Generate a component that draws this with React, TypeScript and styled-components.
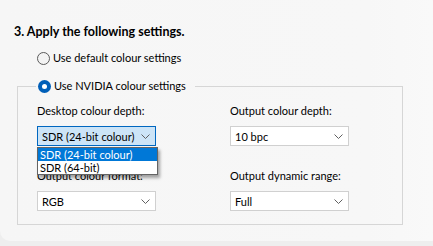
import React from "react";
import styled, { createGlobalStyle } from "styled-components";

const Global = createGlobalStyle`
  html, body { margin: 0; padding: 0; background: #eeeeee; }
  body { font-family: Lato, "Noto Sans", sans-serif; font-size: 11px; color: #000; }
  * { box-sizing: border-box; }
`;

const Panel = styled.div`
  width: 433px;
  height: 241px;
  background: linear-gradient(to right, #f6f6f6 0%, #f7f7f7 85%, #f9f9f9 100%);
  border-bottom-left-radius: 10px;
  padding-top: 24px;
  overflow: hidden;
`;

const Title = styled.div`
  font-weight: 700;
  font-size: 12.5px;
  line-height: 16px;
  margin-left: 14px;
  color: #000;
`;

const RadioRow = styled.label<{ $indent?: number }>`
  display: flex;
  align-items: center;
  gap: 3px;
  height: 16px;
  line-height: 16px;
  margin-left: ${(p) => p.$indent ?? 0}px;
  color: #000;
  white-space: nowrap;
`;

const RadioDot = styled.span<{ $checked?: boolean }>`
  width: 13px;
  height: 13px;
  border-radius: 50%;
  flex: none;
  display: flex;
  align-items: center;
  justify-content: center;
  border: ${(p) => (p.$checked ? "none" : "1px solid #5a5a5a")};
  background: ${(p) => (p.$checked ? "#005fb8" : "#f3f3f3")};
  &::after {
    content: "";
    display: ${(p) => (p.$checked ? "block" : "none")};
    width: 5px;
    height: 5px;
    border-radius: 50%;
    background: #ffffff;
  }
`;

const FirstRadio = styled.div`
  margin-top: 10px;
`;

const Group = styled.fieldset`
  margin: 12px 0 0 17px;
  width: 386px;
  border: 1px solid #d6d6d6;
  padding: 9px 0 13px 19px;
  min-width: 0;
`;

const Legend = styled.legend`
  padding: 0 9px 0 2px;
  margin-left: -1px;
`;

const Grid = styled.div`
  display: grid;
  grid-template-columns: 193px 1fr;
  row-gap: 22px;
`;

const Field = styled.div`
  display: flex;
  flex-direction: column;
  gap: 7px;
  position: relative;
`;

const Label = styled.div`
  line-height: 16px;
  color: #000;
  white-space: nowrap;
`;

const SelectBox = styled.div<{ $focused?: boolean }>`
  position: relative;
  width: 119px;
  height: 20px;
  display: flex;
  align-items: center;
  justify-content: space-between;
  padding: 0 5px 0 4px;
  background: ${(p) => (p.$focused ? "#cce4f7" : "#ffffff")};
  border: 1px solid ${(p) => (p.$focused ? "#0067c0" : "#d0d0d0")};
  color: #000;
  white-space: nowrap;
`;

const Chevron = () => (
  <svg width="9" height="5" viewBox="0 0 9 5" style={{ display: "block" }}>
    <path d="M0.5 0.5 L4.5 4.5 L8.5 0.5" fill="none" stroke="#606060" strokeWidth="1" />
  </svg>
);

const Popup = styled.div`
  position: absolute;
  top: 20px;
  left: -1px;
  width: 121px;
  background: #ffffff;
  border: 1px solid #646464;
  box-shadow: 2px 3px 3px rgba(0, 0, 0, 0.35);
  z-index: 5;
  padding: 0;
`;

const Option = styled.div<{ $active?: boolean }>`
  height: 13px;
  line-height: 13px;
  padding-left: 2px;
  background: ${(p) => (p.$active ? "#0078d7" : "#ffffff")};
  color: ${(p) => (p.$active ? "#ffffff" : "#000000")};
  white-space: nowrap;
`;

const Select = ({ value, focused, children }: { value: string; focused?: boolean; children?: React.ReactNode }) => (
  <SelectBox $focused={focused}>
    <span>{value}</span>
    <Chevron />
    {children}
  </SelectBox>
);

export default function App() {
  return (
    <>
      <Global />
      <Panel>
        <Title>3. Apply the following settings.</Title>
        <FirstRadio>
          <RadioRow $indent={37}>
            <RadioDot />
            Use default colour settings
          </RadioRow>
        </FirstRadio>
        <Group>
          <Legend>
            <RadioRow>
              <RadioDot $checked />
              Use NVIDIA colour settings
            </RadioRow>
          </Legend>
          <Grid>
            <Field>
              <Label>Desktop colour depth:</Label>
              <Select value="SDR (24-bit colour)" focused>
                <Popup>
                  <Option $active>SDR (24-bit colour)</Option>
                  <Option>SDR (64-bit)</Option>
                </Popup>
              </Select>
            </Field>
            <Field>
              <Label>Output colour depth:</Label>
              <Select value="10 bpc" />
            </Field>
            <Field>
              <Label>Output colour format:</Label>
              <Select value="RGB" />
            </Field>
            <Field>
              <Label>Output dynamic range:</Label>
              <Select value="Full" />
            </Field>
          </Grid>
        </Group>
      </Panel>
    </>
  );
}
